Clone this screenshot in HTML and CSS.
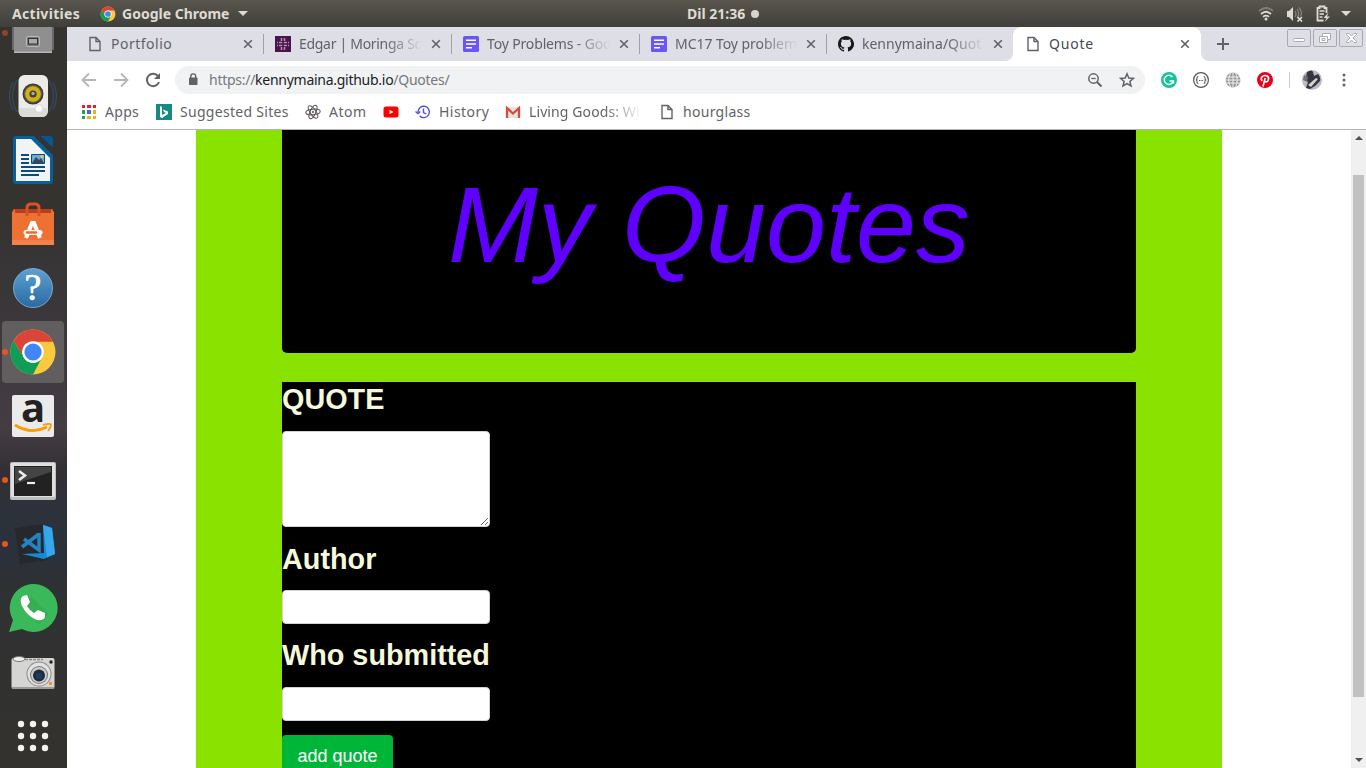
FILE: index.html
```html
<!DOCTYPE html>
<html lang="en">
<head>
<meta charset="utf-8">
<title>Quote</title>
<link rel="stylesheet" href="styles.css">
</head>
<body>
<svg class="defs" width="0" height="0">
  <symbol id="file" viewBox="0 0 16 16"><path d="M3 1.5h6l4 4v9H3zM9 1.5v4h4" fill="none" stroke="#5f6368" stroke-width="1.4"/></symbol>
  <symbol id="close" viewBox="0 0 10 10"><path d="M1.2 1.2l7.6 7.6M8.800 1.200l-7.600 7.600" stroke="#5f6368" stroke-width="1.6" fill="none"/></symbol>
  <symbol id="doc" viewBox="0 0 16 16"><rect width="16" height="16" rx="1.500" fill="#6a56f6"/><path d="M3 4.200h10M3 8h10M3 11.800h6" stroke="#fff" stroke-width="1.500"/></symbol>
  <symbol id="chrome" viewBox="0 0 48 48"><circle cx="24" cy="24" r="22.500" fill="#fbc93d"/><path d="M4.500 12.800A22.500 22.500 0 0 1 44 13.800H24A10.500 10.500 0 0 0 14.500 29z" fill="#db4437"/><path d="M4.500 12.800L14.800 29.200A10.500 10.500 0 0 0 33.200 29.200L24 46.500A22.500 22.500 0 0 1 4.500 12.800z" fill="#109d58"/><circle cx="24" cy="24" r="10.800" fill="#fff"/><circle cx="24" cy="24" r="8.600" fill="#4285f4"/></symbol>
</svg>

<header class="topbar">
  <span class="activities">Activities</span>
  <svg class="app-icon" width="16" height="16"><use href="#chrome"/></svg>
  <span class="app-name">Google Chrome</span>
  <i class="caret"></i>
  <span class="clock">Dil 21:36</span><i class="dot"></i>
  <div class="tray">
    <svg width="16" height="16" viewBox="0 0 16 16" fill="none" stroke="#dedbd3" stroke-width="1.700"><path d="M1 5q7-6 14 0" opacity=".35"/><path d="M3 8q5-4.500 10 0"/><path d="M5 10.800q3-2.500 6 0"/><circle cx="8" cy="13" r="1.500" fill="#dedbd3" stroke="none"/></svg>
    <svg width="17" height="16" viewBox="0 0 17 16"><path d="M1 5h2l4-4v14l-4-4H1z" fill="#dedbd3"/><path d="M9 5q2 3 0 6M11 3q3.500 5 0 9M13 1.500q4 5 1.500 9" fill="none" stroke="#85827a" stroke-width="1.300"/><path d="M11.500 11l4.500 4.500M16 11l-4.500 4.500" stroke="#dedbd3" stroke-width="1.700"/></svg>
    <svg width="16" height="17" viewBox="0 0 16 17"><path d="M8.500 15.500H2.500V3h2V1.500h5V3h2v5" fill="none" stroke="#dedbd3" stroke-width="1.800"/><path d="M4.500 6h5M4.500 9h4.500M4.500 12h3" stroke="#dedbd3" stroke-width="1.500"/><path d="M13.500 7.500l-5 5.500h3l-2 4 5.500-5.500h-3z" fill="#dedbd3"/></svg>
    <i class="caret"></i>
  </div>
</header>

<div class="desktop">
<nav class="dock">
  <div class="dock-item first running">
    <svg width="42" height="26" viewBox="0 0 42 26"><path d="M0 0h42v23H0z" fill="#696969"/><path d="M2 0h38v26H2z" fill="#8f8f8f"/><path d="M2 24.500h38V26H2z" fill="#b8b8b8"/><rect x="14.500" y="9.500" width="13" height="10" rx="1.500" fill="#777" stroke="#bbb"/><rect x="16.500" y="11.500" width="9" height="5.500" fill="#aaa" stroke="#333"/></svg>
  </div>
  <div class="dock-item">
    <svg width="48" height="48" viewBox="0 0 48 48"><g fill="none" stroke="#35485e" stroke-width="1.300"><path d="M8 8q-9 16 0 32M4 10q-7 14 0 28M40 8q9 16 0 32M44 10q7 14 0 28"/></g><rect x="9.500" y="3" width="29.500" height="42" rx="6" fill="#ecebe8"/><path d="M10 36h28.500v4q0 5-6 5h-17q-5.500 0-5.500-5z" fill="#dbdbd8"/><circle cx="24" cy="22" r="10.500" fill="#393b3d"/><circle cx="24" cy="22" r="9" fill="#666342"/><circle cx="24" cy="22" r="7.800" fill="#d3ae16"/><circle cx="24" cy="22" r="3.600" fill="#3b4144"/><circle cx="24" cy="21.500" r="1.700" fill="#aaa"/><circle cx="30" cy="36.500" r="4" fill="#fafafa" stroke="#ccc" stroke-width=".7"/></svg>
  </div>
  <div class="dock-item">
    <svg width="48" height="48" viewBox="0 0 48 48"><path d="M7 0h18l19 19v26q0 3-3 3H7q-3 0-3-3V3q0-3 3-3z" fill="#075f9b"/><path d="M31 0h10q3 0 3 3v9z" fill="#08568b"/><path d="M25 0h6l13 12v7z" fill="#34332f"/><path d="M7 3h15l19 19v23H7z" fill="#f3f3f3"/><path d="M12 19h8M12 23h8M12 27h8M12 31h24M12 35h24M12 39h18" stroke="#084d7b" stroke-width="2"/><path d="M22.500 18.500h13v9h-13z" fill="#67acdd" stroke="#084d7b"/><path d="M23 27l4-6 3 3 2-2 3 5z" fill="#374a4f"/><circle cx="33" cy="20.500" r="1.500" fill="#f1cc54"/></svg>
  </div>
  <div class="dock-item">
    <svg width="48" height="48" viewBox="0 0 48 48"><path d="M4 9h40v6H4z" fill="#b83e1c"/><path d="M3 12l3-3v4h36V9l3 3v33H3z" fill="#ee7134"/><path d="M3 40h42v5H3z" fill="#f4814a"/><path d="M18 16V8q0-4 4-4h4q4 0 4 4v8" fill="none" stroke="#d95124" stroke-width="3"/><path d="M17 38l6-15h2l6 15" fill="none" stroke="#fff" stroke-width="4"/><path d="M17 32.500h14" stroke="#fff" stroke-width="5" stroke-linecap="round"/><path d="M18 32.500h9" stroke="#ec6a2d" stroke-width="2.500" stroke-linecap="round"/></svg>
  </div>
  <div class="dock-item"><div class="help">?</div></div>
  <div class="dock-item running"><div class="selected"><svg width="48" height="48"><use href="#chrome"/></svg></div></div>
  <div class="dock-item"><div class="amazon"><span>a</span><svg width="40" height="12" viewBox="0 0 40 12"><path d="M2 2q16 10 32 2" fill="none" stroke="#ff9900" stroke-width="2.800"/><path d="M30 1.800q7-1.500 8-.5Q38 5 35 8" fill="none" stroke="#ff9900" stroke-width="1.700"/></svg></div></div>
  <div class="dock-item running low">
    <svg width="46" height="40" viewBox="0 0 46 40"><rect y="1" width="46" height="38" rx="2" fill="#bdbdbd"/><rect x="1" y="2" width="44" height="34" rx="1" fill="#dfdfdf"/><rect x="4" y="5" width="38" height="30" fill="#222"/><path d="M5 6h36v5L5 23z" fill="#444"/><path d="M9 10l6 4.500L9 19" fill="none" stroke="#eee" stroke-width="2.500"/><path d="M17 22h8" stroke="#eee" stroke-width="2.200"/></svg>
  </div>
  <div class="dock-item running">
    <svg width="48" height="48" viewBox="0 0 48 48"><path d="M6 8l28-4 4 36-27 4z" fill="#27282b"/><path d="M34 5l9 3 3 26-11 5-22-5 22-1z" fill="#168bd5"/><path d="M34 5l9 3 3 26-8 3z" fill="#35a8ed"/><path d="M30 13v17L15 19M13 27l17-13" fill="none" stroke="#2583c5" stroke-width="3.500"/></svg>
  </div>
  <div class="dock-item">
    <svg width="50" height="50" viewBox="0 0 50 50"><path d="M25 1A24 24 0 1 1 14 46L1 49l4-12A24 24 0 0 1 25 1z" fill="#3bb95a"/><path d="M15 23L23 13l18 18-10 10z" fill="#33a34e" opacity=".5"/><path d="M15 13q-4 3-1 10 5 10 15 14 6 1 8-3v-4l-7-3-4 3q-4-2-7-7l3-4-3-7z" fill="#fff"/></svg>
  </div>
  <div class="dock-item low">
    <svg width="46" height="36" viewBox="0 0 46 36"><rect x="1.500" y="3" width="43" height="31" rx="2" fill="#d5d5d3"/><path d="M2 32h42v2H2z" fill="#9a9a9a"/><ellipse cx="9" cy="4" rx="6" ry="2.500" fill="#eee" stroke="#777"/><path d="M15 4.500h18" stroke="#888" stroke-width="1.500" stroke-dasharray="3 1"/><circle cx="29" cy="19" r="12.500" fill="#888"/><circle cx="29" cy="19" r="11.500" fill="#e2e2e2"/><circle cx="29" cy="20" r="9" fill="#777"/><circle cx="29" cy="20" r="8" fill="#ccc"/><circle cx="29" cy="20.500" r="6" fill="#222c38"/><rect x="26" y="18" width="6" height="6" fill="#193c67"/><circle cx="41" cy="7" r="1.700" fill="#222"/><rect x="39" y="27" width="3" height="3" fill="#e89a25"/></svg>
  </div>
  <div class="dock-item apps-grid">
    <svg width="32" height="32" viewBox="0 0 32 32" fill="#f3f2f0"><circle cx="4" cy="4" r="3.200"/><circle cx="16" cy="4" r="3.200"/><circle cx="28" cy="4" r="3.200"/><circle cx="4" cy="16" r="3.200"/><circle cx="16" cy="16" r="3.200"/><circle cx="28" cy="16" r="3.200"/><circle cx="4" cy="28" r="3.200"/><circle cx="16" cy="28" r="3.200"/><circle cx="28" cy="28" r="3.200"/></svg>
  </div>
</nav>

<div class="browser">
  <div class="tabs">
    <div class="tab"><svg class="fav"><use href="#file"/></svg><span class="title portfolio">Portfolio</span><svg class="x"><use href="#close"/></svg></div>
    <div class="tab"><svg class="fav" viewBox="0 0 16 16"><path d="M0 0h16v16H0z" fill="#4a154b"/><path d="M6.500 2v4.500H2M9.500 2v4.500H14M6.500 14V9.500H2M9.500 14V9.500H14" fill="none" stroke="#b391b2" stroke-width="1.500" stroke-dasharray="3 1"/></svg><span class="title fade edgar">Edgar | Moringa Sc</span><svg class="x"><use href="#close"/></svg></div>
    <div class="tab"><svg class="fav"><use href="#doc"/></svg><span class="title fade toy">Toy Problems - Goo</span><svg class="x"><use href="#close"/></svg></div>
    <div class="tab narrow"><svg class="fav"><use href="#doc"/></svg><span class="title fade mc">MC17 Toy problem</span><svg class="x"><use href="#close"/></svg></div>
    <div class="tab narrow last"><svg class="fav" viewBox="0 0 16 16"><path fill="#191717" d="M8 0C3.580 0 0 3.580 0 8c0 3.540 2.290 6.530 5.470 7.590.4.070.55-.17.55-.38v-1.500c-2.010.37-2.530-.49-2.690-.94-.09-.23-.48-.94-.82-1.130-.28-.15-.68-.52-.01-.53.630-.010 1.080.58 1.230.82.72 1.210 1.870.87 2.330.66.070-.52.28-.87.51-1.070-1.780-.2-3.640-.89-3.640-3.950 0-.87.310-1.590.82-2.150-.08-.2-.36-1.020.08-2.120 0 0 .67-.21 2.200.82a7.400 7.400 0 0 1 4 0c1.530-1.040 2.200-.82 2.200-.82.44 1.100.16 1.920.08 2.120.51.56.82 1.270.82 2.150 0 3.070-1.870 3.750-3.650 3.950.29.25.54.73.54 1.480v2.200c0 .21.15.46.55.38A8 8 0 0 0 8 0z"/></svg><span class="title fade repo">kennymaina/Quot</span><svg class="x"><use href="#close"/></svg></div>
    <div class="tab active"><svg class="fav"><use href="#file"/></svg><span class="title">Quote</span><svg class="x"><use href="#close"/></svg></div>
    <div class="strip-end">
      <svg width="12" height="12" viewBox="0 0 12 12"><path d="M6 0v12M0 6h12" stroke="#5f6368" stroke-width="2"/></svg>
      <div class="winbtns">
        <svg viewBox="0 0 24 18"><rect x=".5" y=".5" width="23" height="17" rx="1.500"/><rect x="6.500" y="9.500" width="11" height="3" rx="1" fill="#fff"/></svg>
        <svg viewBox="0 0 24 18"><rect x=".5" y=".5" width="23" height="17" rx="1.500"/><path d="M9.500 4.500h8v6h-3v3h-8v-6h3z" fill="#fff"/><path d="M9.500 7.500h5v3M9 9.500h3v2H9z"/></svg>
        <svg viewBox="0 0 24 18"><rect x=".5" y=".5" width="23" height="17" rx="1.500"/><path d="M7.500 4.500H10l2.500 2.500L15 4.500h2.500v1L14 9l3.500 3.500v1H15L12.500 11 10 13.500H7.500v-1L11 9 7.500 5.500z" fill="#fff"/></svg>
      </div>
    </div>
  </div>

  <div class="toolbar">
    <svg width="16" height="16" viewBox="0 0 16 16" fill="none" stroke="#b4b6b9" stroke-width="1.800"><path d="M15 8H2M8 1.500L1.500 8 8 14.500"/></svg>
    <svg width="16" height="16" viewBox="0 0 16 16" fill="none" stroke="#b4b6b9" stroke-width="1.800"><path d="M1 8h13M8 1.500L14.500 8 8 14.500"/></svg>
    <svg width="16" height="16" viewBox="0 0 16 16"><path d="M13.300 4.500A6.200 6.200 0 1 0 14 10" fill="none" stroke="#5f6368" stroke-width="2"/><path d="M15 1v6H9z" fill="#5f6368"/></svg>
    <div class="omnibox">
      <svg width="10" height="13" viewBox="0 0 10 13"><rect x="1" y="4.500" width="8.500" height="7.500" rx=".8" fill="#5f6368"/><path d="M2.800 5V3.300a2.400 2.400 0 0 1 4.900 0V5" fill="none" stroke="#5f6368" stroke-width="1.400"/></svg>
      <span class="url">https://<b>kennymaina.github.io</b>/Quotes/</span>
      <svg width="16" height="16" viewBox="0 0 16 16" fill="none" stroke="#5f6368"><circle cx="6.500" cy="6.500" r="4.700" stroke-width="1.500"/><path d="M10 10l4.500 4.500" stroke-width="2"/><path d="M4.300 6.500h4.400" stroke-width="1.300"/></svg>
      <svg width="16" height="16" viewBox="0 0 16 16" fill="none" stroke="#5f6368" stroke-width="1.500"><path d="M8 1.800l1.800 4.200 4.600.4-3.500 3 1.100 4.500L8 11.500l-4 2.400 1.100-4.500-3.500-3 4.600-.4z"/></svg>
    </div>
    <div class="exts">
      <svg width="16" height="16" viewBox="0 0 16 16"><circle cx="8" cy="8" r="8" fill="#15c39a"/><path d="M11.500 5A4.600 4.600 0 1 0 12.300 9M8.500 9h4v2.500" fill="none" stroke="#fff" stroke-width="1.500"/></svg>
      <svg width="16" height="16" viewBox="0 0 16 16" fill="none" stroke="#555"><circle cx="8" cy="8" r="7.400" stroke-width="1.200"/><path d="M5.300 4.500q-1.300 0-1.300 1.500v1l-.8 1 .8 1v1q0 1.500 1.300 1.500M10.700 4.500q1.300 0 1.300 1.500v1l.8 1-.8 1v1q0 1.500-1.300 1.500" stroke-width="1.100"/><path d="M6 8.500h1M7.600 8.500h1M9.200 8.500h1"/></svg>
      <svg width="16" height="16" viewBox="0 0 16 16"><circle cx="8" cy="8" r="7.500" fill="#999"/><path d="M0 5h16M0 8h16M0 11h16M8 0v16M5.500 1q-3.500 7 0 14M10.500 1q3.500 7 0 14" fill="none" stroke="#fff" stroke-width=".8"/></svg>
      <svg width="16" height="16" viewBox="0 0 16 16"><circle cx="8" cy="8" r="8" fill="#e60019"/><path d="M5 9Q3.500 6.500 5 4.800q2-2 4.800-1 2.700 1.500 1.400 4.500-1.400 2.500-3.200 1M8.200 6L6 14.500" fill="none" stroke="#fff" stroke-width="1.600"/></svg>
      <i class="sep"></i>
      <svg class="avatar" width="20" height="20" viewBox="0 0 20 20"><circle cx="10" cy="10" r="10" fill="#b9bcc8"/><path d="M5 2q5-3 6 0l1 4 4-2q3 3 2 7l-5 5-5 3-4-1 2-6-4-2 2-3z" fill="#36343e"/><path d="M6 15l8-7 2 1-7 8z" fill="#d8d0cd"/><path d="M2 5l4 2-1 4-4-1z" fill="#806d70"/></svg>
      <svg class="menu" width="4" height="16" viewBox="0 0 4 16" fill="#5f6368"><circle cx="2" cy="3" r="1.500"/><circle cx="2" cy="8" r="1.500"/><circle cx="2" cy="13" r="1.500"/></svg>
    </div>
  </div>

  <div class="bookmarks">
    <svg width="16" height="16" viewBox="0 0 16 16"><path d="M1 1h3v3H1zM6 1h4v3H6zM12 1h3v3h-3z" fill="#e51c36"/><path d="M1 6h3v4H1zM1 12h3v3H1z" fill="#21a45d"/><path d="M6 6h4v4H6z" fill="#4263eb"/><path d="M6 12h4v3H6zM12 6h3v4h-3zM12 12h3v3h-3z" fill="#f2b117"/></svg><span class="w-apps">Apps</span>
    <svg width="16" height="16" viewBox="0 0 16 16"><path d="M0 0h16v16H0z" fill="#168985"/><path d="M4 2l2 1v8l4-2-2-1-1-2.500 5 2V10l-6 4-2-1z" fill="#fff"/></svg><span class="w-sites">Suggested Sites</span>
    <svg width="16" height="16" viewBox="0 0 16 16" fill="none" stroke="#5b5452" stroke-width="1"><ellipse cx="8" cy="8" rx="2.800" ry="7.200" transform="rotate(25 8 8)"/><ellipse cx="8" cy="8" rx="2.800" ry="7.200" transform="rotate(85 8 8)"/><ellipse cx="8" cy="8" rx="2.800" ry="7.200" transform="rotate(-35 8 8)"/><circle cx="8" cy="8" r=".8"/></svg><span class="w-atom">Atom</span>
    <svg class="yt" width="16" height="16" viewBox="0 0 16 16"><rect x=".5" y="2.500" width="15" height="11" rx="2.500" fill="#f00"/><path d="M6.500 5.800v4.400l4-2.200z" fill="#fff"/></svg>
    <svg width="16" height="16" viewBox="0 0 16 16" fill="none" stroke="#4d4de8" stroke-width="1.400"><path d="M3 8a5.700 5.700 0 1 1 1.700 4M.5 7.500l2.500 2 2.300-2M8.500 4.500v4l2.800 1.500"/></svg><span class="w-history">History</span>
    <svg width="16" height="16" viewBox="0 0 16 16"><path d="M1 3h14v11H1z" fill="#e5e3e2"/><path d="M2 14V4l6 5.500L14 4v10" fill="none" stroke="#d54b3d" stroke-width="2.300"/></svg><span class="w-gmail fade">Living Goods: Wh</span>
    <svg width="16" height="16"><use href="#file"/></svg><span class="w-hour">hourglass</span>
  </div>

  <div class="viewport">
    <main class="page">
      <div class="container">
        <div class="jumbotron"><h1>My Quotes</h1></div>
        <form class="quote-form">
          <label>QUOTE</label>
          <textarea></textarea>
          <label>Author</label>
          <input type="text">
          <label>Who submitted</label>
          <input type="text">
          <button type="button">add quote</button>
        </form>
      </div>
    </main>
    <div class="scrollbar"><i class="up"></i><i class="thumb"></i><i class="down"></i></div>
  </div>
</div>
</div>
</body>
</html>
```
FILE: styles.css
```css
* { box-sizing: border-box; }
body { margin: 0; width: 1366px; height: 768px; overflow: hidden; font-family: "Noto Sans", "Open Sans", sans-serif; font-size: 14px; color: #5f6368; background: #fff; }
svg { display: block; flex: none; }
.defs { position: absolute; }

.topbar { height: 27px; display: flex; align-items: center; background: linear-gradient(#59564e, #403f3a); color: #dfdbd2; font-weight: 700; font-size: 14px; line-height: 26px; white-space: nowrap; }
.activities { width: 88px; padding-left: 12px; margin-right: 12px; letter-spacing: .3px; }
.app-name { width: 116px; padding-left: 6px; }
.caret { width: 0; height: 0; border: 5px solid transparent; border-top-color: #dfdbd2; border-bottom: 0; margin-left: 6px; }
.clock { margin-left: 439px; width: 64px; }
.dot { width: 8px; height: 8px; border-radius: 50%; background: #d8d4cc; }
.tray { margin-left: auto; display: flex; align-items: center; gap: 12px; padding-right: 15px; }
.tray .caret { margin-left: -2px; }

.desktop { display: flex; height: 741px; }
.dock { width: 67px; background: linear-gradient(#343330 0, #343330 190px, #3c383d 300px, #443d43 400px, #332e35 445px, #2d323a 480px, #2a313b 525px, #303132 570px, #33322e 741px); }
.dock-item { position: relative; height: 64px; display: flex; align-items: center; justify-content: center; }
.dock-item.first { height: 37px; align-items: flex-start; }
.dock-item > svg, .help, .amazon { margin-right: 1px; }
.low > svg { margin-top: 2px; }
.running::before { content: ""; position: absolute; left: 2px; top: 29px; width: 6px; height: 6px; border-radius: 50%; background: #e95420; }
.first.running::before { top: 3px; background: #8e4529; }
.selected { width: 62px; height: 62px; margin-right: 1px; border-radius: 4px; background: #625e60; display: grid; place-items: center; }
.help { width: 40px; height: 40px; border-radius: 50%; background: linear-gradient(#5fa0d2, #286aa3); border: 1px solid #78a9ce; color: #fff; font: 38px/37px "Liberation Serif", serif; -webkit-text-stroke: .6px #fff; text-align: center; }
.amazon { width: 42px; height: 42px; border-radius: 2px; background: #ebebeb; display: flex; flex-direction: column; align-items: center; }
.amazon span { font: bold 40px/24px "Open Sans", sans-serif; height: 28px; color: #222; }

.browser { width: 1299px; }
.tabs { height: 34px; display: flex; background: #fff; }
.tab { width: 188px; display: flex; align-items: center; padding-left: 12px; background: #dedee6; }
.tab:first-child { width: 196px; padding-left: 20px; }
.tab.narrow { width: 187px; }
.tab:not(:first-child):not(.active) { background: linear-gradient(#a1a1aa, #a1a1aa) left center / 1px 20px no-repeat #dedee6; }
.tab.last { border-bottom-right-radius: 8px; }
.tab.active { background: radial-gradient(circle at 8px 8px, #fff 7.5px, #dedee6 8px) 0 0 / 8px 8px no-repeat, radial-gradient(circle at 0 8px, #fff 7.5px, #dedee6 8px) right 0 top 0 / 8px 8px no-repeat, #fff; color: #45484d; letter-spacing: .8px; }
.fav { width: 16px; height: 16px; }
.title { margin-left: 8px; width: 124px; overflow: hidden; white-space: nowrap; line-height: 24px; }
.narrow .title { width: 123px; }
.active .title { width: 123px; }
.portfolio { letter-spacing: .5px; }
.edgar { letter-spacing: -.3px; }
.toy { letter-spacing: -.15px; }
.mc { letter-spacing: -.05px; }
.fade { -webkit-mask-image: linear-gradient(90deg, #000 calc(100% - 38px), transparent); mask-image: linear-gradient(90deg, #000 calc(100% - 38px), transparent); }
.x { width: 10px; height: 10px; margin-left: 8px; }
.strip-end { flex: 1; display: flex; justify-content: space-between; background: #dedee6; border-bottom-left-radius: 8px; padding-left: 16px; }
.strip-end > svg { margin-top: 11px; }
.winbtns { display: flex; gap: 2px; padding: 2px 3px 0 0; }
.winbtns svg { width: 24px; height: 18px; fill: none; stroke: #a9a9b1; }

.toolbar { height: 37px; display: flex; align-items: center; gap: 16px; padding-left: 14px; }
.omnibox { width: 970px; height: 28px; margin-left: -2px; border-radius: 14px; background: #f1f2f4; display: flex; align-items: center; padding: 0 10px 0 13px; }
.url { margin-left: 11px; margin-right: auto; color: #74787c; line-height: 26px; letter-spacing: -.27px; }
.url b { font-weight: 400; color: #202124; }
.omnibox svg:last-child { margin-left: 16px; }
.exts { display: flex; align-items: center; gap: 16px; }
.sep { width: 1px; height: 16px; background: #ccc; }
.avatar { margin-left: -4px; }
.menu { margin-left: 4px; }

.bookmarks { height: 32px; display: flex; align-items: center; padding: 0 0 4px 14px; white-space: nowrap; border-bottom: 1px solid #b5b5b8; }
.bookmarks span { margin: 0 16px 0 8px; line-height: 24px; }
.bookmarks .yt { margin-right: 16px; }
.w-apps { width: 35px; letter-spacing: .3px; }
.w-sites { width: 109px; letter-spacing: .3px; }
.w-atom { width: 38px; letter-spacing: .5px; }
.w-history { width: 50px; letter-spacing: .45px; }
.w-gmail { width: 113px; overflow: hidden; letter-spacing: .1px; }
.w-hour { letter-spacing: .3px; }
.bookmarks .w-gmail { margin-right: 17px; }

.viewport { height: 638px; display: flex; font-family: "Liberation Sans", Arial, sans-serif; font-size: 18px; overflow: hidden; }
.page { flex: 1; padding: 0 129px; background: #fff; }
.container { height: 638px; background: #8ae200; padding: 0 86px; overflow: hidden; }
.jumbotron { height: 223px; background: #000; border-radius: 0 0 5px 5px; padding-top: 30px; margin-bottom: 29px; }
h1 { margin: 0; color: #5f00ff; font-size: 108px; font-style: italic; font-weight: 400; line-height: 130px; text-align: center; }
.quote-form { height: 400px; background: #000; display: flex; flex-direction: column; align-items: flex-start; }
label { color: #f5f9da; font-weight: 700; font-size: 28.8px; line-height: 34px; }
textarea, input { width: 208px; background: #fff; border: 1px solid #ced4da; border-radius: 4px; padding: 0; margin: 0; }
textarea { height: 96px; margin: 15px 0; }
input { height: 34px; margin: 14px 0; }
label + input:nth-of-type(2) { margin-top: 15px; }
button { width: 111px; height: 42px; flex: none; background: #00b638; border: 0; border-radius: 4px; color: #fff; font: 18px/27px "Liberation Sans", sans-serif; padding: 8px 0 7px; }
.scrollbar { width: 15px; background: #f0f0f0; display: flex; flex-direction: column; align-items: center; }
.up, .down { border: 4px solid transparent; width: 0; height: 0; }
.up { border-bottom: 4px solid #505050; border-top: 0; margin: 6px 0 35px; }
.thumb { width: 11px; height: 522px; background: #c1c1c1; }
.down { border-top: 4px solid #505050; border-bottom: 0; margin-top: auto; margin-bottom: 6px; }
```
